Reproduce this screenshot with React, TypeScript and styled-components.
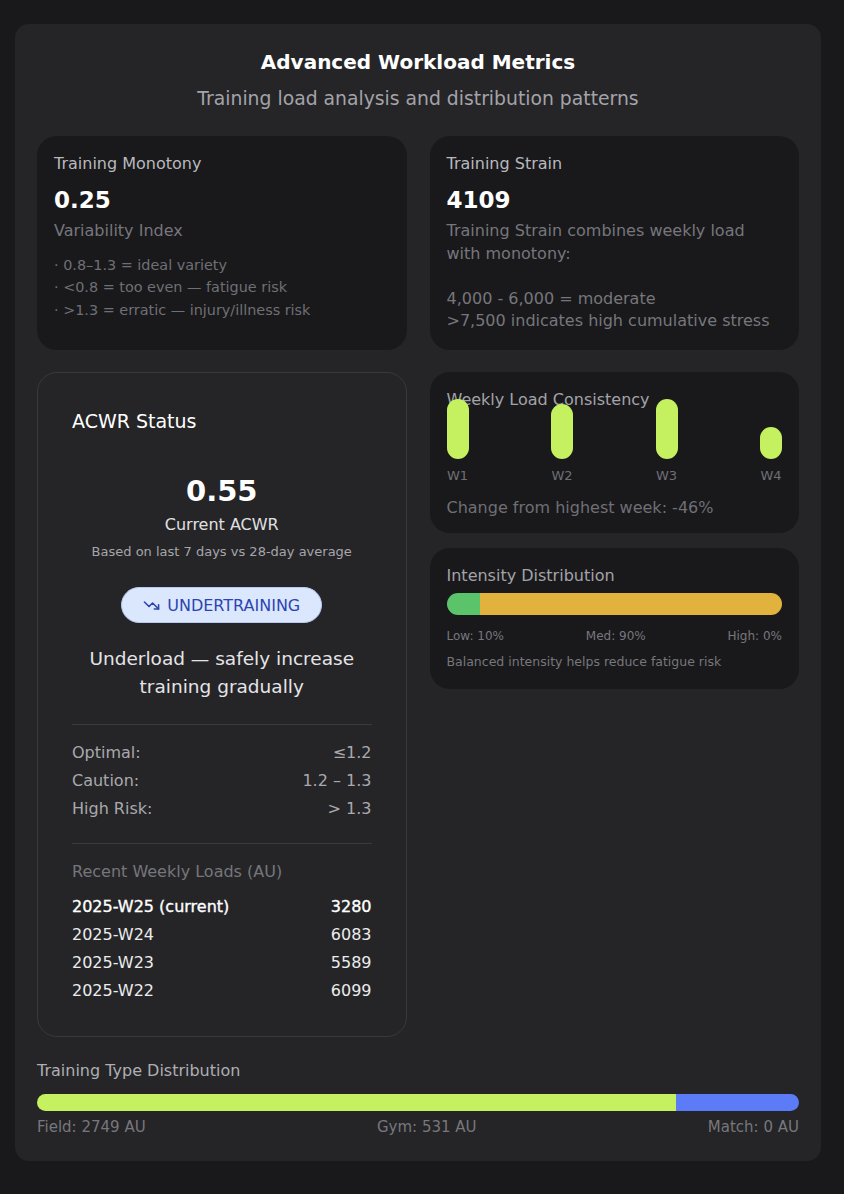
import React from "react";
import styled, { createGlobalStyle } from "styled-components";
import { TrendingDown } from "lucide-react";

const GlobalStyle = createGlobalStyle`
  html, body { margin: 0; padding: 0; background: #19191b; }
  body { font-family: "DejaVu Sans", "Open Sans", sans-serif; color: #fff; }
  * { box-sizing: border-box; }
`;

const Page = styled.div`
  padding: 24px 23px 34px 15px;
  width: 844px;
`;

const Panel = styled.section`
  background: #252527;
  border-radius: 14px;
  padding: 24px 22px 24px 22px;
  display: flex;
  flex-direction: column;
`;

const Header = styled.header`
  text-align: center;
  margin-bottom: 25px;
`;

const Title = styled.h1`
  margin: 0;
  font-size: 20px;
  font-weight: 600;
  line-height: 28px;
  color: #fff;
`;

const Subtitle = styled.p`
  margin: 11px 0 0;
  font-size: 18.8px;
  line-height: 24px;
  color: #a3a3aa;
`;

const Grid = styled.div`
  display: grid;
  grid-template-columns: 1fr 1fr;
  column-gap: 23px;
  row-gap: 22px;
  align-items: start;
`;

const Column = styled.div`
  display: flex;
  flex-direction: column;
  gap: 15px;
`;

const DarkCard = styled.div<{ $h?: number; $pb?: number }>`
  background: #19191b;
  border-radius: 20px;
  padding: 16px 17px ${(p) => p.$pb ?? 18}px;
  ${(p) => (p.$h ? `height: ${p.$h}px;` : "")}
`;

const CardLabel = styled.div`
  font-size: 16px;
  line-height: 24px;
  color: #b8b8be;
`;

const BigValue = styled.div`
  margin-top: 10px;
  font-size: 23px;
  font-weight: 700;
  line-height: 28px;
  color: #fff;
`;

const Muted = styled.div`
  margin-top: 6px;
  font-size: 16px;
  line-height: 22.5px;
  color: #76767c;
  white-space: pre-line;
`;

const BulletList = styled.ul`
  list-style: none;
  margin: 11px 0 0;
  padding: 0;
  font-size: 14.4px;
  line-height: 22.5px;
  color: #6f6f75;
`;

const AcwrCard = styled.div`
  border: 1px solid #39393c;
  border-radius: 20px;
  padding: 35px 34px 31px;
  display: flex;
  flex-direction: column;
`;

const AcwrTitle = styled.h2`
  margin: 0;
  font-size: 19px;
  font-weight: 400;
  line-height: 26px;
  color: #fff;
`;

const Center = styled.div`
  display: flex;
  flex-direction: column;
  align-items: center;
  text-align: center;
  margin-top: 38px;
`;

const AcwrValue = styled.div`
  font-size: 29px;
  font-weight: 700;
  line-height: 38px;
`;

const AcwrLabel = styled.div`
  margin-top: 4px;
  font-size: 16px;
  line-height: 22px;
  color: #e0e0e3;
`;

const AcwrNote = styled.div`
  margin-top: 7px;
  font-size: 13px;
  line-height: 18px;
  color: #a5a5ab;
`;

const Badge = styled.div`
  margin-top: 26px;
  display: inline-flex;
  align-items: center;
  gap: 7px;
  height: 36px;
  padding: 0 21px;
  border-radius: 999px;
  background: #dbe7fc;
  border: 1px solid #b8c8ee;
  color: #2e43b3;
  font-size: 16px;
  font-weight: 400;
`;

const Advice = styled.p`
  margin: 22px 0 0;
  font-size: 18.5px;
  line-height: 28px;
  color: #e4e4e7;
`;

const Divider = styled.hr<{ $mt?: number }>`
  border: none;
  border-top: 1px solid #3a3a3d;
  margin: ${(p) => p.$mt ?? 23}px 0 0;
  width: 100%;
`;

const Rows = styled.div<{ $mt?: number }>`
  display: flex;
  flex-direction: column;
  margin-top: ${(p) => p.$mt ?? 14}px;
`;

const Row = styled.div<{ $strong?: boolean; $tone?: "muted" | "light" }>`
  display: flex;
  justify-content: space-between;
  font-size: 16px;
  line-height: 28px;
  color: ${(p) => (p.$tone === "muted" ? "#a9a9ae" : p.$strong ? "#ffffff" : "#ececee")};
  -webkit-text-stroke: ${(p) => (p.$strong ? "0.35px #ffffff" : "0")};
`;

const SectionLabel = styled.div`
  margin-top: 16px;
  font-size: 16px;
  line-height: 24px;
  color: #76767c;
`;

const ChartTitle = styled.div`
  font-size: 16px;
  line-height: 24px;
  color: #a3a3a9;
  position: relative;
  z-index: 0;
`;

const BarArea = styled.div`
  height: 47px;
  display: flex;
  justify-content: space-between;
  align-items: flex-end;
  position: relative;
  z-index: 1;
`;

const Bar = styled.div`
  width: 22px;
  border-radius: 11px;
  background: #c5f05f;
`;

const BarLabels = styled.div`
  display: flex;
  justify-content: space-between;
  margin-top: 7px;
`;

const BarLabel = styled.span`
  width: 22px;
  display: flex;
  justify-content: center;
  font-size: 13px;
  line-height: 20px;
  color: #6f6f75;
`;

const ChangeText = styled.div`
  margin-top: 10px;
  font-size: 16px;
  line-height: 24px;
  color: #6f6f75;
`;

const StackBar = styled.div<{ $h: number; $mt: number }>`
  display: flex;
  height: ${(p) => p.$h}px;
  margin-top: ${(p) => p.$mt}px;
  border-radius: 999px;
  overflow: hidden;
`;

const Segment = styled.div<{ $color: string }>`
  background: ${(p) => p.$color};
  height: 100%;
`;

const LegendRow = styled.div<{ $size: number; $mt: number }>`
  display: flex;
  justify-content: space-between;
  margin-top: ${(p) => p.$mt}px;
  font-size: ${(p) => p.$size}px;
  line-height: 20px;
  color: #77777d;
`;

const SmallNote = styled.div`
  margin-top: 7px;
  font-size: 12.5px;
  line-height: 18px;
  color: #77777d;
`;

const Footer = styled.div`
  margin-top: 22px;
  display: flex;
  flex-direction: column;
`;

const FooterLabel = styled.div`
  font-size: 16px;
  line-height: 24px;
  color: #aeaeb3;
`;

const weekly = [
  { label: "W1", value: 6099 },
  { label: "W2", value: 5589 },
  { label: "W3", value: 6083 },
  { label: "W4", value: 3280 },
];
const maxW = Math.max(...weekly.map((w) => w.value));

const recent = [
  { week: "2025-W25 (current)", load: 3280, current: true },
  { week: "2025-W24", load: 6083 },
  { week: "2025-W23", load: 5589 },
  { week: "2025-W22", load: 6099 },
];

const field = 2749;
const gym = 531;
const match = 0;
const total = field + gym + match;

export default function App() {
  return (
    <>
      <GlobalStyle />
      <Page>
        <Panel>
          <Header>
            <Title>Advanced Workload Metrics</Title>
            <Subtitle>Training load analysis and distribution patterns</Subtitle>
          </Header>

          <Grid>
            <DarkCard $h={214}>
              <CardLabel>Training Monotony</CardLabel>
              <BigValue>0.25</BigValue>
              <Muted>Variability Index</Muted>
              <BulletList>
                <li>· 0.8–1.3 = ideal variety</li>
                <li>· &lt;0.8 = too even — fatigue risk</li>
                <li>· &gt;1.3 = erratic — injury/illness risk</li>
              </BulletList>
            </DarkCard>

            <DarkCard $h={214}>
              <CardLabel>Training Strain</CardLabel>
              <BigValue>4109</BigValue>
              <Muted>
                {"Training Strain combines weekly load\nwith monotony:\n\n4,000 - 6,000 = moderate\n>7,500 indicates high cumulative stress"}
              </Muted>
            </DarkCard>

            <AcwrCard>
              <AcwrTitle>ACWR Status</AcwrTitle>
              <Center>
                <AcwrValue>0.55</AcwrValue>
                <AcwrLabel>Current ACWR</AcwrLabel>
                <AcwrNote>Based on last 7 days vs 28-day average</AcwrNote>
                <Badge>
                  <TrendingDown size={17} strokeWidth={2.2} />
                  UNDERTRAINING
                </Badge>
                <Advice>
                  Underload — safely increase
                  <br />
                  training gradually
                </Advice>
              </Center>
              <Divider />
              <Rows>
                <Row $tone="muted">
                  <span>Optimal:</span>
                  <span>≤1.2</span>
                </Row>
                <Row $tone="muted">
                  <span>Caution:</span>
                  <span>1.2 – 1.3</span>
                </Row>
                <Row $tone="muted">
                  <span>High Risk:</span>
                  <span>&gt; 1.3</span>
                </Row>
              </Rows>
              <Divider $mt={20} />
              <SectionLabel>Recent Weekly Loads (AU)</SectionLabel>
              <Rows $mt={9}>
                {recent.map((r) => (
                  <Row key={r.week} $strong={r.current}>
                    <span>{r.week}</span>
                    <span>{r.load}</span>
                  </Row>
                ))}
              </Rows>
            </AcwrCard>

            <Column>
              <DarkCard $pb={13}>
                <ChartTitle>Weekly Load Consistency</ChartTitle>
                <BarArea>
                  {weekly.map((w) => (
                    <Bar key={w.label} style={{ height: Math.round((w.value / maxW) * 60) }} />
                  ))}
                </BarArea>
                <BarLabels>
                  {weekly.map((w) => (
                    <BarLabel key={w.label}>{w.label}</BarLabel>
                  ))}
                </BarLabels>
                <ChangeText>Change from highest week: -46%</ChangeText>
              </DarkCard>

              <DarkCard>
                <ChartTitle>Intensity Distribution</ChartTitle>
                <StackBar $h={22} $mt={5}>
                  <Segment $color="#5bc46a" style={{ width: "10%" }} />
                  <Segment $color="#e1b33d" style={{ width: "90%" }} />
                </StackBar>
                <LegendRow $size={12} $mt={11}>
                  <span>Low: 10%</span>
                  <span>Med: 90%</span>
                  <span>High: 0%</span>
                </LegendRow>
                <SmallNote>Balanced intensity helps reduce fatigue risk</SmallNote>
              </DarkCard>
            </Column>
          </Grid>

          <Footer>
            <FooterLabel>Training Type Distribution</FooterLabel>
            <StackBar $h={17} $mt={11}>
              <Segment $color="#c5f05f" style={{ width: `${(field / total) * 100}%` }} />
              <Segment $color="#5b7cf6" style={{ width: `${(gym / total) * 100}%` }} />
              <Segment $color="#e06060" style={{ width: `${(match / total) * 100}%` }} />
            </StackBar>
            <LegendRow $size={15} $mt={6}>
              <span>Field: {field} AU</span>
              <span>Gym: {gym} AU</span>
              <span>Match: {match} AU</span>
            </LegendRow>
          </Footer>
        </Panel>
      </Page>
    </>
  );
}
